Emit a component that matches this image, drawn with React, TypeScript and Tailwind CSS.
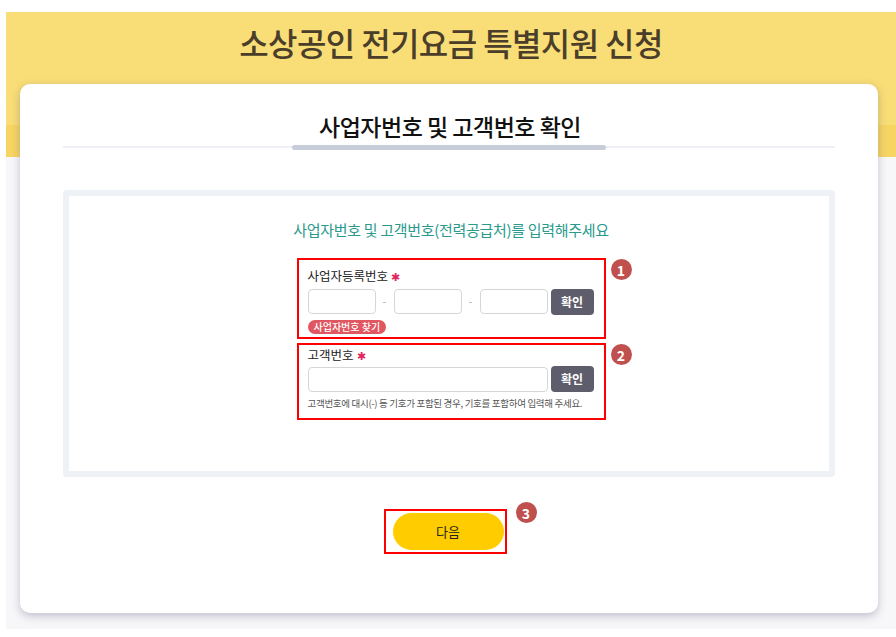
import { useState } from "react";

const font = { fontFamily: '"Noto Sans CJK KR", "Noto Sans", sans-serif' };

function Badge({ n, className }: { n: number; className: string }) {
  return (
    <span className={`absolute w-[21px] h-[21px] rounded-full bg-[#c0504d] text-white text-[14px] font-bold leading-none flex items-center justify-center ${className}`}>
      {n}
    </span>
  );
}

function ConfirmButton() {
  return (
    <button className="w-[43px] h-[26px] rounded-[4px] bg-[#5d5d6c] text-white text-[12px] font-bold">확인</button>
  );
}

export default function App() {
  const [biz, setBiz] = useState(["", "", ""]);
  const [customer, setCustomer] = useState("");

  return (
    <div style={font} className="bg-white pt-[12px] pl-[6px] h-[637px] overflow-hidden">
      <div className="w-[890px] h-[617px] flex flex-col bg-[linear-gradient(to_bottom,#f9dd76_0,#f9dd76_113px,#f6d562_113px,#f6d562_145px,#f7f7f9_145px)]">
        <h1 className="h-[72px] flex items-center justify-center pb-[12px] text-[32px] font-medium tracking-[-0.6px] text-[#4a3e2a]">
          소상공인 전기요금 특별지원 신청
        </h1>

        <div className="ml-[14px] w-[858px] h-[529px] rounded-[10px] bg-white shadow-[0_3px_8px_rgba(90,90,130,0.35)] px-[43px] pt-[26px] flex flex-col">
          <h2 className="text-center text-[23px] font-medium text-[#111] tracking-[-0.5px] leading-[32px] pl-[2px]">
            사업자번호 및 고객번호 확인
          </h2>
          <div className="relative mt-[2px] h-[6px] flex items-center">
            <div className="w-full h-[2px] bg-[#eef0f5]" />
            <div className="absolute left-[229px] w-[314px] h-[5px] rounded-full bg-[#c7cdd9]" />
          </div>

          <div className="mt-[40px] h-[287px] rounded-[4px] border-[6px] border-[#eef1f6] flex flex-col items-center pt-[24px]">
            <p className="text-[15px] text-[#2a9a8c] tracking-[-0.3px] leading-[20px] pl-[4px]">
              사업자번호 및 고객번호(전력공급처)를 입력해주세요
            </p>

            <div className="mt-[18px] ml-[4px] relative w-[309px] h-[81px] border-2 border-[#ff0000] px-[9px] pt-[6px]">
              <Badge n={1} className="right-[-28px] top-[-1px]" />
              <div className="text-[12.5px] text-[#222] leading-[20px] flex items-center">
                사업자등록번호<span className="ml-[3px] text-[#e0245e] text-[11px]">✱</span>
              </div>
              <div className="mt-[2px] flex items-center">
                {biz.map((v, i) => (
                  <div key={i} className="flex items-center">
                    {i > 0 && <span className="w-[18px] text-center text-[11px] text-[#aaa]">-</span>}
                    <input
                      value={v}
                      onChange={(e) => setBiz(biz.map((b, j) => (j === i ? e.target.value : b)))}
                      className="w-[68px] h-[25px] rounded-[4px] border border-[#d6d6d6] bg-white outline-none px-1 text-[12px]"
                    />
                  </div>
                ))}
                <div className="ml-[3px]">
                  <ConfirmButton />
                </div>
              </div>
              <div className="mt-[5px] flex">
                <span className="inline-flex items-center h-[14px] px-[6px] rounded-full bg-[#e05761] text-white text-[10px] font-medium leading-none">
                  사업자번호 찾기
                </span>
              </div>
            </div>

            <div className="mt-[4px] ml-[4px] relative w-[309px] h-[77px] border-2 border-[#ff0000] px-[9px] pt-[0px]">
              <Badge n={2} className="right-[-28px] top-[-1px]" />
              <div className="text-[12.5px] text-[#222] leading-[20px] flex items-center">
                고객번호<span className="ml-[3px] text-[#e0245e] text-[11px]">✱</span>
              </div>
              <div className="mt-[1px] flex items-center gap-[3px]">
                <input
                  value={customer}
                  onChange={(e) => setCustomer(e.target.value)}
                  className="w-[240px] h-[25px] rounded-[4px] border border-[#d6d6d6] bg-white outline-none px-1 text-[12px]"
                />
                <ConfirmButton />
              </div>
              <p className="mt-[4px] text-[9.5px] text-[#555] tracking-[-0.3px] leading-[14px] whitespace-nowrap">
                고객번호에 대시(-) 등 기호가 포함된 경우, 기호를 포함하여 입력해 주세요.
              </p>
            </div>
          </div>

          <div className="mt-[32px] flex justify-center">
            <div className="relative mr-[8px] w-[123px] h-[45px] border-2 border-[#ff0000] flex items-center pl-[7px]">
              <button className="w-[111px] h-[37px] rounded-full bg-[#ffcc00] text-[13px] text-[#222]">다음</button>
              <Badge n={3} className="right-[-32px] top-[-9px]" />
            </div>
          </div>
        </div>
      </div>
    </div>
  );
}
